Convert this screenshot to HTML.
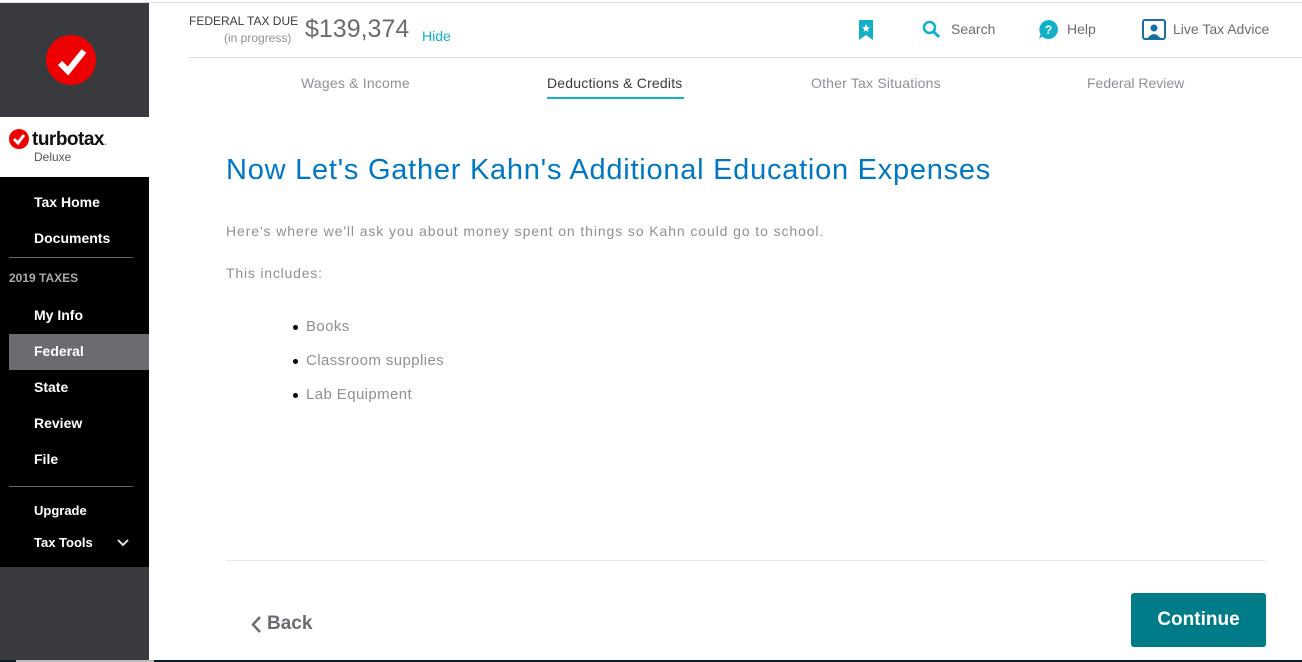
<!DOCTYPE html>
<html><head><style>
*{margin:0;padding:0;box-sizing:border-box}
body{width:1302px;height:662px;overflow:hidden;background:#fff;font-family:"Liberation Sans",sans-serif;position:relative}
.a{position:absolute}
.side a{position:absolute;left:34px;color:#fff;font-size:14px;font-weight:bold;text-decoration:none}
.nav{position:absolute;top:75px;font-size:14px;color:#8d9096}
.ic{position:absolute;top:21px;font-size:14px;color:#6b6c72}
.li{position:absolute;left:306px;font-size:15px;color:#8d9096;letter-spacing:0.4px}
.li:before{content:"";position:absolute;left:-13px;top:7px;width:5px;height:5px;border-radius:50%;background:#000}
</style></head><body>
<div class="a" style="left:0;top:2px;width:1302px;height:1px;background:#dcdce0"></div>
<div class="a" style="left:0;top:3px;width:149px;height:114px;background:#393a3e"></div>
<div class="a" style="left:46px;top:35px;width:50px;height:50px;border-radius:50%;background:#e00"></div>
<svg class="a" style="left:46px;top:35px" width="50" height="50"><path d="M14 28 L22 36 L38 16" stroke="#fff" stroke-width="6" fill="none"/></svg>
<div class="a" style="left:9px;top:129px;width:20px;height:20px;border-radius:50%;background:#e00"></div>
<svg class="a" style="left:9px;top:129px" width="20" height="20"><path d="M5 10 L9 14 L15 6" stroke="#fff" stroke-width="3" fill="none"/></svg>
<div class="a" style="left:32px;top:129px;font-size:19px;font-weight:bold;color:#111;letter-spacing:-0.5px">turbotax<span style="font-size:10px;color:#888">.</span></div>
<div class="a" style="left:34px;top:150px;font-size:12px;color:#555">Deluxe</div>
<div class="a side" style="left:0;top:177px;width:149px;height:390px;background:#000">
<a style="top:17px">Tax Home</a><a style="top:53px">Documents</a>
<div class="a" style="left:9px;top:80px;width:124px;height:1px;background:#666"></div>
<div class="a" style="left:9px;top:94px;font-size:12px;color:#aaa;font-weight:bold">2019 TAXES</div>
<a style="top:130px">My Info</a>
<div class="a" style="left:9px;top:157px;width:140px;height:36px;background:#6b6c70"></div>
<a style="top:166px">Federal</a><a style="top:202px">State</a><a style="top:238px">Review</a><a style="top:274px">File</a>
<div class="a" style="left:9px;top:309px;width:124px;height:1px;background:#666"></div>
<a style="top:326px;font-size:13px">Upgrade</a><a style="top:358px;font-size:13px">Tax Tools</a>
<svg class="a" style="left:117px;top:361px" width="12" height="10"><path d="M1 2 L6 7 L11 2" stroke="#ddd" stroke-width="2" fill="none"/></svg>
</div>
<div class="a" style="left:0;top:567px;width:149px;height:93px;background:#393a3e"></div>
<div class="a" style="left:0;top:660px;width:1302px;height:2px;background:#0a1c2c"></div>
<div class="a" style="left:16px;top:660px;width:138px;height:2px;background:#bbb"></div>

<div class="a" style="left:189px;top:14px;font-size:12px;color:#393a3e">FEDERAL TAX DUE</div>
<div class="a" style="left:224px;top:31px;font-size:12px;color:#8d9096">(in progress)</div>
<div class="a" style="left:305px;top:15px;font-size:25px;color:#6b6c72">$139,374</div>
<div class="a" style="left:422px;top:28px;font-size:14px;color:#0fb0c8">Hide</div>
<svg class="a" style="left:858px;top:19px" width="16" height="22"><path d="M1 1 H15 V21 L8 16 L1 21Z" fill="#0fb0c8"/><path d="M8 5 L9.2 8 L12 8.2 L9.8 10 L10.5 13 L8 11.3 L5.5 13 L6.2 10 L4 8.2 L6.8 8Z" fill="#fff"/></svg>
<svg class="a" style="left:922px;top:20px" width="20" height="20"><circle cx="7.5" cy="7.5" r="5.5" stroke="#0fb0c8" stroke-width="2.5" fill="none"/><path d="M11.5 11.5 L17 17" stroke="#0fb0c8" stroke-width="3"/></svg>
<div class="ic" style="left:951px">Search</div>
<svg class="a" style="left:1038px;top:19px" width="21" height="21"><path d="M10.5 1 A9.5 9.5 0 1 1 4 17.5 L1 20 L2.5 15 A9.5 9.5 0 0 1 10.5 1Z" fill="#0fb0c8"/><text x="10.5" y="15" font-size="12" font-weight="bold" fill="#fff" text-anchor="middle" font-family="Liberation Sans">?</text></svg>
<div class="ic" style="left:1067px">Help</div>
<svg class="a" style="left:1142px;top:19px" width="24" height="21"><rect x="1" y="1" width="22" height="19" rx="2" fill="none" stroke="#1b6ea5" stroke-width="2"/><circle cx="12" cy="9" r="3.5" fill="#1b6ea5"/><path d="M5 20 Q12 10 19 20Z" fill="#1b6ea5"/></svg>
<div class="ic" style="left:1173px">Live Tax Advice</div>
<div class="a" style="left:189px;top:57px;width:1113px;height:1px;background:#dcdce0"></div>
<div class="nav" style="left:301px;letter-spacing:0.2px">Wages &amp; Income</div>
<div class="nav" style="left:547px;color:#393a3e;letter-spacing:0.2px">Deductions &amp; Credits</div>
<div class="a" style="left:547px;top:97px;width:137px;height:2px;background:#0fb0c8"></div>
<div class="nav" style="left:811px;letter-spacing:0.2px">Other Tax Situations</div>
<div class="nav" style="left:1087px">Federal Review</div>

<div class="a" style="left:226px;top:154px;font-size:29px;color:#0077c5;letter-spacing:0.75px;white-space:nowrap">Now Let's Gather Kahn's Additional Education Expenses</div>
<div class="a" style="left:226px;top:223px;font-size:14px;color:#8d9096;letter-spacing:0.9px;white-space:nowrap">Here's where we'll ask you about money spent on things so Kahn could go to school.</div>
<div class="a" style="left:226px;top:265px;font-size:14px;color:#8d9096;letter-spacing:0.8px">This includes:</div>
<div class="li" style="top:318px">Books</div>
<div class="li" style="top:352px">Classroom supplies</div>
<div class="li" style="top:386px">Lab Equipment</div>
<div class="a" style="left:226px;top:560px;width:1040px;height:1px;background:#e8e8ea"></div>
<svg class="a" style="left:250px;top:615px" width="12" height="19"><path d="M10 2 L3 9.5 L10 17" stroke="#6b6c72" stroke-width="2.5" fill="none"/></svg>
<div class="a" style="left:267px;top:613px;font-size:19px;font-weight:bold;color:#6b6c72">Back</div>
<div class="a" style="left:1131px;top:593px;width:135px;height:54px;background:#007c89;border-radius:3px;color:#fff;font-size:19px;font-weight:bold;text-align:center;line-height:54px">Continue</div>
</body></html>
